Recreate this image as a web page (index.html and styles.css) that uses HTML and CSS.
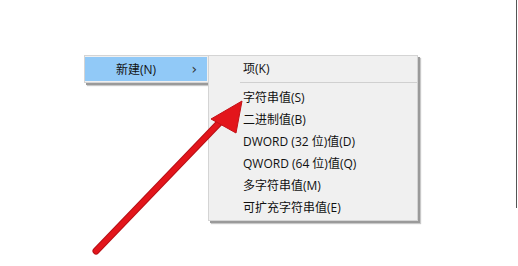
FILE: index.html
```html
<!DOCTYPE html>
<html lang="zh">
<head>
<meta charset="utf-8">
<link rel="stylesheet" href="styles.css">
</head>
<body>
<div class="stage">
  <div class="edge"></div>
  <div class="menu parent">
    <div class="item active"><span class="label">新建(N)</span><span class="chev">›</span></div>
  </div>
  <div class="menu sub">
    <div class="item">项(K)</div>
    <div class="sep"></div>
    <div class="item">字符串值(S)</div>
    <div class="item">二进制值(B)</div>
    <div class="item">DWORD (32 位)值(D)</div>
    <div class="item">QWORD (64 位)值(Q)</div>
    <div class="item">多字符串值(M)</div>
    <div class="item">可扩充字符串值(E)</div>
  </div>
  <svg class="arrow" width="518" height="266" viewBox="0 0 518 266">
    <line x1="96" y1="251" x2="222" y2="120" stroke="#b81016" stroke-width="7" stroke-linecap="round"/>
    <line x1="96" y1="251" x2="222" y2="120" stroke="#e3151b" stroke-width="5" stroke-linecap="round"/>
    <polygon points="242,101 236,133 211,119" fill="#e3151b" stroke="#c41117" stroke-width="1" stroke-linejoin="round"/>
  </svg>
</div>
</body>
</html>
```
FILE: styles.css
```css
html, body {
  margin: 0;
  padding: 0;
  background: #ffffff;
}
.stage {
  position: relative;
  width: 518px;
  height: 266px;
  overflow: hidden;
  font-family: "Open Sans", "Noto Sans CJK SC", sans-serif;
  font-size: 12px;
  color: #111;
}
.edge {
  position: absolute;
  left: 516px;
  top: 0;
  width: 1px;
  height: 208px;
  background: #555;
}
.menu {
  position: absolute;
  background: #f0f0f0;
  border: 1px solid #d4d4d4;
  box-sizing: border-box;
  box-shadow: 2px 2px 0 #9a9a9a, 3px 3px 1px #c8c8c8;
}
.parent {
  left: 84px;
  top: 55px;
  width: 130px;
  height: 28px;
  padding: 1px 0 1px 0;
}
.parent .item {
  display: flex;
  align-items: center;
  height: 24px;
  background: #91c9f7;
  padding-left: 31px;
  padding-right: 10px;
  margin-right: 6px;
}
.parent .label {
  flex: 1;
}
.parent .chev {
  font-family: "DejaVu Sans", sans-serif;
  font-size: 14px;
  color: #333;
}
.sub {
  left: 208px;
  top: 55px;
  width: 210px;
  height: 166px;
  padding: 2px 0;
}
.sub .item {
  height: 22px;
  line-height: 22px;
  padding-left: 34px;
  white-space: nowrap;
}
.sep {
  height: 1px;
  background: #d0d0d0;
  margin: 2px 0 4px 31px;
}
.arrow {
  position: absolute;
  left: 0;
  top: 0;
}
```
